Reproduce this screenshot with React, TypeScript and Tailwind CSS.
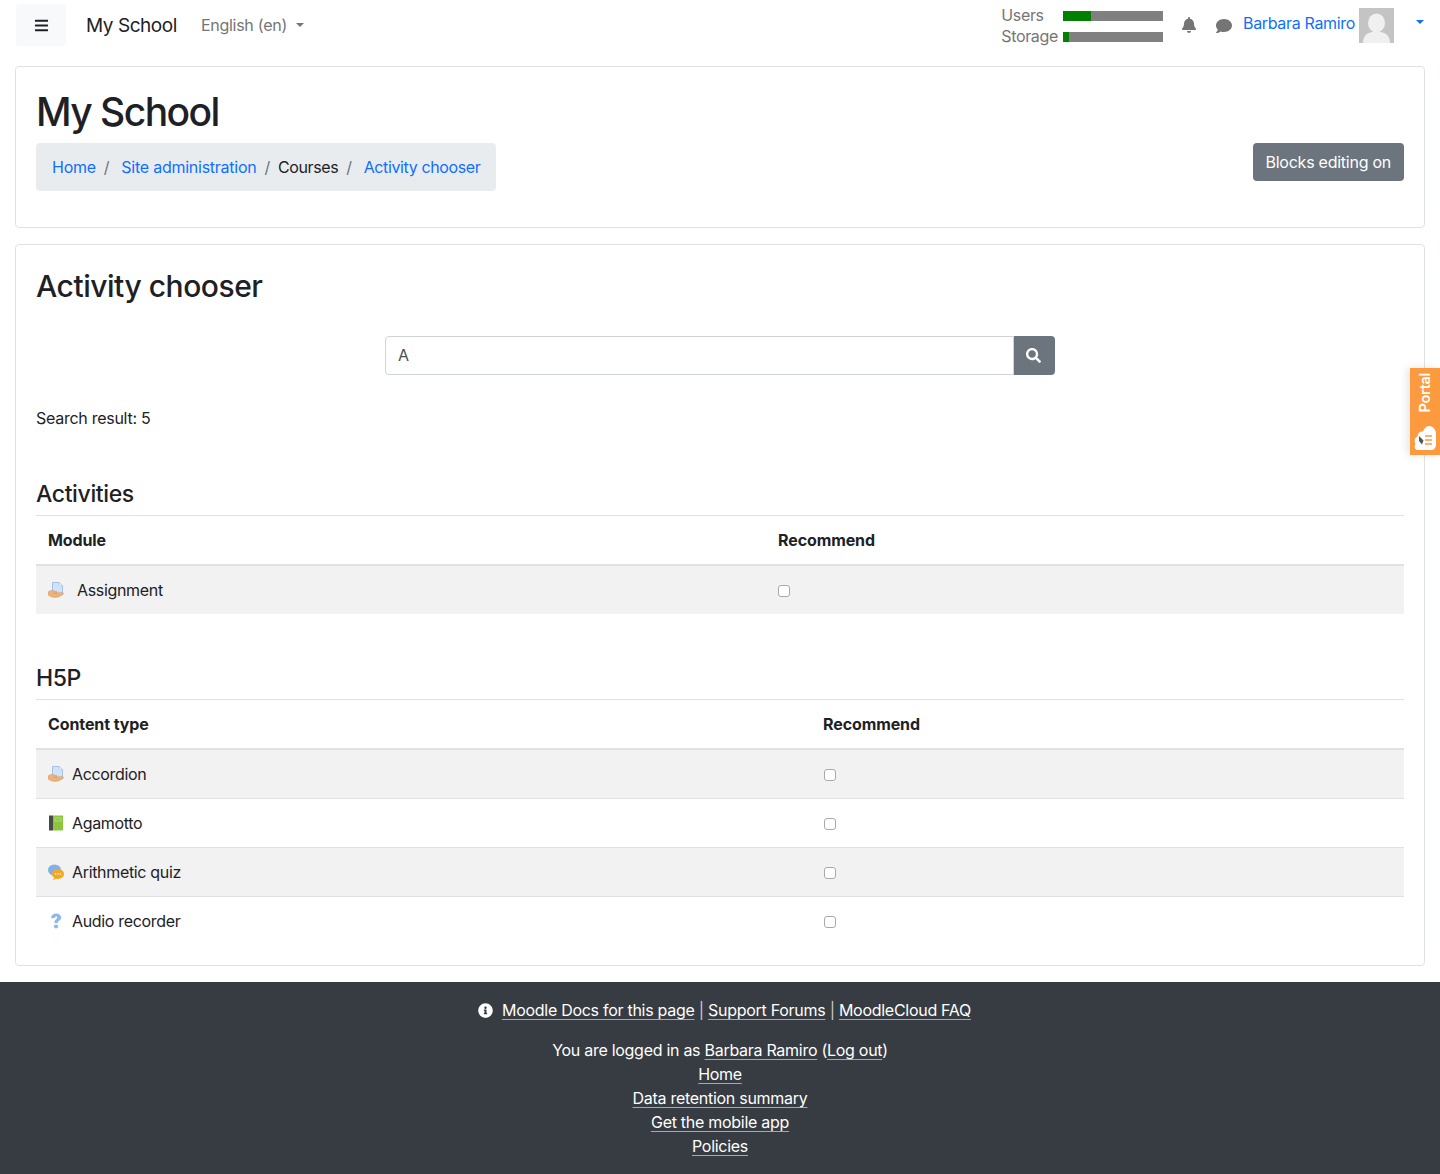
import React from "react";
import { FaBars, FaBell, FaComment, FaSearch, FaInfoCircle } from "react-icons/fa";

const font = { fontFamily: "Inter, 'Liberation Sans', sans-serif" };

function AssignIcon() {
  return (
    <svg viewBox="0 0 16 16" className="h-4 w-4 shrink-0">
      <path d="M4.500 0.500h6.500l3.500 3.500v8.500h-10z" fill="#d3e3f7" stroke="#94b8e4" strokeWidth="0.8" />
      <path d="M11 0.500v3.500h3.500z" fill="#f2f7fd" stroke="#94b8e4" strokeWidth="0.5" />
      <path d="M0.100 10c1.900-1.500 3.900-1.800 5.400-1.300l3 .8c1 .3 1 1.300 0 1.500l-2.300.4 7.400-1c1.900-.2 2.400 1.200 1.300 2-2.300 1.700-5 3.100-8 3.100-2.800 0-5-1.200-6.800-2.500z" fill="#ecb27a" stroke="#c98a55" strokeWidth="0.4" />
    </svg>
  );
}
function BookIcon() {
  return (
    <svg viewBox="0 0 16 16" className="h-4 w-4 shrink-0">
      <rect x="1" y="0.500" width="4" height="15" fill="#4a4a46" />
      <rect x="5" y="0.500" width="10" height="15" fill="#8cc63f" />
      <rect x="7" y="3" width="6" height="3" fill="none" stroke="#b9e07c" strokeWidth="0.8" />
    </svg>
  );
}
function QuizIcon() {
  return (
    <svg viewBox="0 0 16 16" className="h-4 w-4 shrink-0">
      <ellipse cx="6.500" cy="6" rx="6.500" ry="5.500" fill="#7fb0ea" />
      <ellipse cx="10" cy="10" rx="6" ry="5" fill="#f4a81f" />
      <path d="M6 14l-1 2 4-1.500z" fill="#f4a81f" />
      <circle cx="7.600" cy="10" r="0.800" fill="#fff" />
      <circle cx="10" cy="10" r="0.800" fill="#fff" />
      <circle cx="12.400" cy="10" r="0.800" fill="#fff" />
    </svg>
  );
}
function QuestionIcon() {
  return (
    <svg viewBox="0 0 16 16" className="h-4 w-4 shrink-0">
      <path d="M3 5.200C3.300 2 5.500 0.500 8.200 0.500c2.900 0 4.900 1.700 4.900 4 0 1.800-1 2.700-2.200 3.500-.9.600-1.200 1-1.200 2H6.400c0-1.900.5-2.800 1.700-3.700.8-.6 1.200-1 1.200-1.600 0-.8-.5-1.200-1.200-1.200-.8 0-1.300.6-1.400 1.600z" fill="#8db8ee" />
      <circle cx="8" cy="13.500" r="2.100" fill="#8db8ee" />
    </svg>
  );
}

function Check() {
  return <input type="checkbox" className="mt-[1px] block h-[12px] w-[12px] appearance-none rounded-[3px] border border-[#a9a9a9] bg-white" />;
}

function Sep({ cls }: { cls: string }) {
  return <span className={`text-[#6c757d] ${cls}`}>/</span>;
}

function TableHead({ a, col }: { a: string; col: string }) {
  return (
    <div className="flex h-[51px] items-center border-t border-b-2 border-[#dee2e6] font-bold tracking-[-0.1px] text-[#1d2125]">
      <div className={`${col} px-3`}>{a}</div>
      <div className="px-3">Recommend</div>
    </div>
  );
}

function Row({ icon, label, col, gray, gap, last }: { icon: React.ReactNode; label: string; col: string; gray?: boolean; gap: string; last?: boolean }) {
  return (
    <div className={`flex items-center ${last ? "h-[48px]" : "h-[49px] border-b border-[#dee2e6]"} ${gray ? "bg-[#f2f2f2]" : "bg-white"}`}>
      <div className={`${col} flex items-center px-3 ${gap}`}>
        {icon}
        <span>{label}</span>
      </div>
      <div className="px-3">
        <Check />
      </div>
    </div>
  );
}

function FootLink({ children }: { children: React.ReactNode }) {
  return <a className="text-white underline decoration-[#a5a8ad] underline-offset-[3px]">{children}</a>;
}

export default function App() {
  return (
    <div style={font} className="relative h-[1174px] overflow-hidden bg-white text-[16px] leading-[24px] tracking-[-0.33px] text-[#1d2125]">
      <header className="flex h-[50px] items-center pr-[16px] pl-4">
        <button className="flex h-[42px] w-[50px] items-center justify-center rounded bg-[#f8f9fa] text-[#1d2125]">
          <FaBars className="text-[15px]" />
        </button>
        <span className="mt-[2px] ml-5 text-[19px] tracking-[-0.45px] text-[#1d2125]">My School</span>
        <span className="ml-6 flex items-center tracking-[-0.27px] text-[#757575]">
          English (en)
          <span className="ml-[9px] border-x-[4px] border-t-[4px] border-x-transparent border-t-[#757575]" />
        </span>
        <div className="ml-auto flex items-center">
          <div className="mt-[2px] grid grid-cols-[auto_100px] items-center gap-x-[5px] leading-[21px] text-[#757575]">
            <span>Users</span>
            <div className="h-[10px] bg-[#808080]">
              <div className="h-full w-[28px] bg-[#008000]" />
            </div>
            <span>Storage</span>
            <div className="h-[10px] bg-[#808080]">
              <div className="h-full w-[6px] bg-[#008000]" />
            </div>
          </div>
          <FaBell className="ml-[18px] text-[16px] text-[#757575]" />
          <FaComment className="mt-[2px] ml-[19px] text-[16px] text-[#757575]" />
          <span className="ml-[11px] -translate-y-[2px] text-[#0f6fff]">Barbara Ramiro</span>
          <div className="ml-[4px] h-[35px] w-[35px] overflow-hidden bg-[#c4c4c4]">
            <svg viewBox="0 0 35 35" className="h-full w-full">
              <ellipse cx="17.500" cy="15" rx="8.500" ry="9.500" fill="#f0f0f0" />
              <path d="M4 35c0-7 4-10 9-11h9c5 1 9 4 9 11z" fill="#f0f0f0" />
            </svg>
          </div>
          <span className="ml-[22px] -translate-y-[3px] border-x-[4px] border-t-[4px] border-x-transparent border-t-[#0f6fff]" />
        </div>
      </header>

      <main className="px-[15px] pt-4">
        <section className="flex h-[162px] flex-col rounded border border-[#dee2e6] px-5 pt-5">
          <h1 className="text-[39px] leading-[50px] font-medium tracking-[-1.55px]">My School</h1>
          <div className="mt-[6px] flex items-start justify-between">
            <nav className="flex h-[48px] items-center rounded bg-[#e9ecef] px-4 tracking-[-0.25px]">
              <a className="text-[#0f6fff]">Home</a>
              <Sep cls="ml-2 mr-[12px]" />
              <a className="text-[#0f6fff]">Site administration</a>
              <Sep cls="ml-2 mr-[8px]" />
              <span className="tracking-[-0.4px]">Courses</span>
              <Sep cls="ml-2 mr-[12px]" />
              <a className="tracking-[-0.38px] text-[#0f6fff]">Activity chooser</a>
            </nav>
            <button className="h-[38px] rounded bg-[#6c757d] px-[13px] tracking-[-0.25px] text-white">Blocks editing on</button>
          </div>
        </section>

        <section className="mt-4 h-[722px] rounded border border-[#dee2e6] px-5 pt-5">
          <h2 className="text-[30px] leading-[42px] font-medium tracking-[-0.47px]">Activity chooser</h2>
          <div className="mt-[29px] flex h-[39px] justify-center">
            <div className="flex h-[39px] w-[670px]">
              <div className="flex flex-1 items-center rounded-l border border-[#ced4da] px-3 pb-[1px] text-[#495057]">A</div>
              <button className="flex w-[41px] items-center justify-center rounded-r bg-[#6c757d] pr-[2px] text-white">
                <FaSearch className="text-[15px]" />
              </button>
            </div>
          </div>
          <p className="mt-[31px] tracking-[-0.27px]">Search result: 5</p>

          <h3 className="mt-[47px] text-[23px] leading-[35px] font-medium tracking-[-0.37px]">Activities</h3>
          <div className="mt-[3px]">
            <TableHead a="Module" col="w-[730px]" />
            <Row icon={<AssignIcon />} label="Assignment" col="w-[730px]" gap="gap-[13px]" gray last />
          </div>

          <h3 className="mt-[47px] text-[23px] leading-[35px] font-medium tracking-[-0.37px]">H5P</h3>
          <div className="mt-[3px]">
            <TableHead a="Content type" col="w-[775px]" />
            <Row icon={<AssignIcon />} label="Accordion" col="w-[776px]" gap="gap-2" gray />
            <Row icon={<BookIcon />} label="Agamotto" col="w-[776px]" gap="gap-2" />
            <Row icon={<QuizIcon />} label="Arithmetic quiz" col="w-[776px]" gap="gap-2" gray />
            <Row icon={<QuestionIcon />} label="Audio recorder" col="w-[776px]" gap="gap-2" last />
          </div>
        </section>
      </main>

      <footer className="mt-4 h-[192px] bg-[#373b42] pt-4 text-center tracking-[-0.28px] text-white">
        <div className="flex items-center justify-center pl-[9px]">
          <FaInfoCircle className="mr-[9px] text-[15px]" />
          <span>
            <FootLink>Moodle Docs for this page</FootLink> <span className="text-[#c8cacc]">|</span> <FootLink>Support Forums</FootLink> <span className="text-[#c8cacc]">|</span> <FootLink>MoodleCloud FAQ</FootLink>
          </span>
        </div>
        <div className="mt-4">
          You are logged in as <FootLink>Barbara Ramiro</FootLink> (<FootLink>Log out</FootLink>)
        </div>
        <div><FootLink>Home</FootLink></div>
        <div><FootLink>Data retention summary</FootLink></div>
        <div><FootLink>Get the mobile app</FootLink></div>
        <div><FootLink>Policies</FootLink></div>
      </footer>

      <aside className="absolute top-[368px] right-0 flex h-[87px] w-[30px] flex-col items-center bg-[#fb9a3e] pt-[5px] text-white shadow-[-3px_0_8px_rgba(0,0,0,0.1)]">
        <span className="rotate-180 text-[14.5px] leading-none font-semibold [writing-mode:vertical-rl]">Portal</span>
        <svg viewBox="0 0 22 32" className="mt-[6px] h-[32px] w-[22px]">
          <path d="M3 32C0.500 31 0 28 1.500 26 0 23 0.500 19.500 3.500 18.500 3.500 15 6 13 9 13.500 10 10 12.500 8 15 8c4 0 7 3.500 7 8v10c0 4-2 6-5 6z" fill="#fff" />
          <path d="M11 18h7M11 22h7M11 26h7" stroke="#fb9a3e" strokeWidth="1.300" />
          <path d="M5 18l4.500 4.500-1.500 4-3-3.500z" fill="#555" />
        </svg>
      </aside>
    </div>
  );
}
